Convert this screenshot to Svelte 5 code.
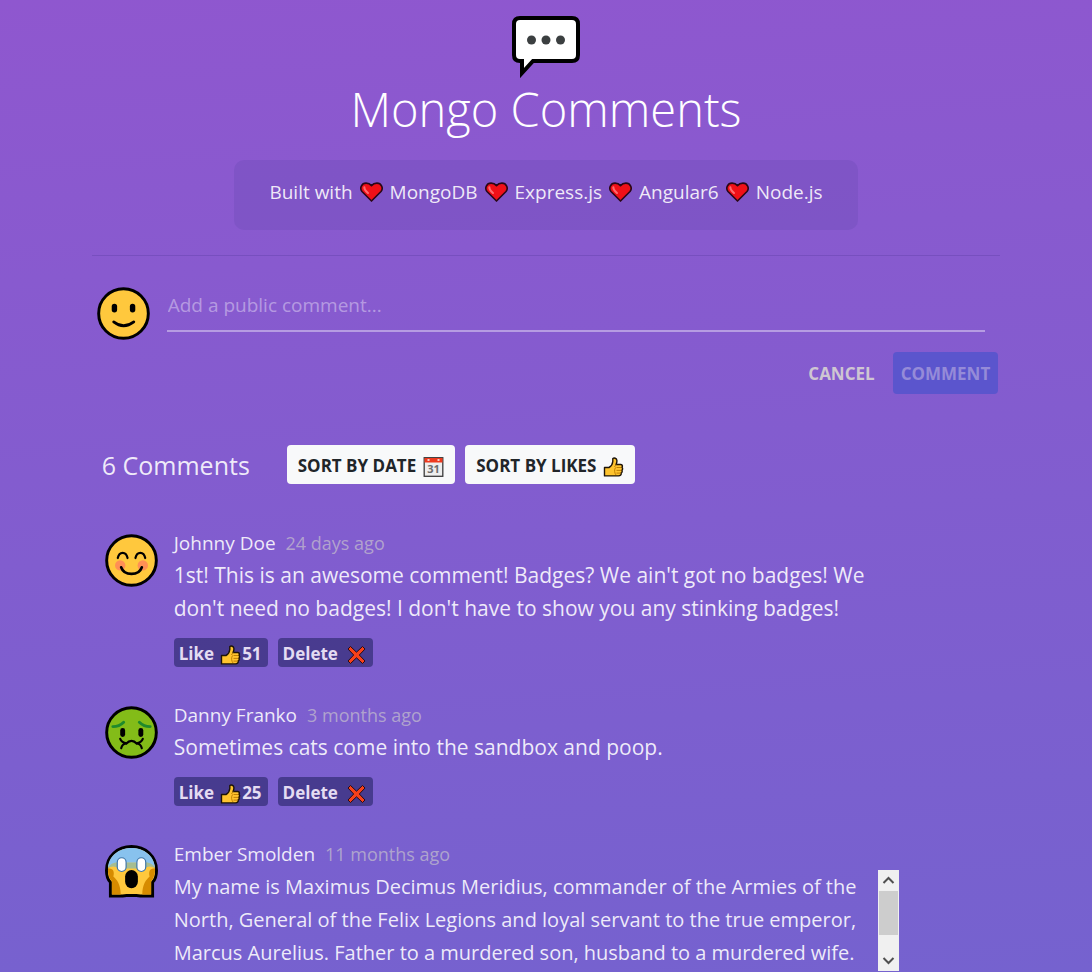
<script>
  let draft = $state('');

  const stack = ['MongoDB', 'Express.js', 'Angular6', 'Node.js'];

  const comments = [
    {
      face: 'blush',
      name: 'Johnny Doe',
      when: '24 days ago',
      likes: 51,
      text: "1st! This is an awesome comment! Badges? We ain't got no badges! We don't need no badges! I don't have to show you any stinking badges!"
    },
    {
      face: 'sick',
      name: 'Danny Franko',
      when: '3 months ago',
      likes: 25,
      text: 'Sometimes cats come into the sandbox and poop.'
    },
    {
      face: 'scream',
      name: 'Ember Smolden',
      when: '11 months ago',
      long: true,
      text: 'My name is Maximus Decimus Meridius, commander of the Armies of the North, General of the Felix Legions and loyal servant to the true emperor, Marcus Aurelius. Father to a murdered son, husband to a murdered wife.'
    }
  ];
</script>

{#snippet heart()}
  <svg class="heart" viewBox="0 0 24 21" aria-hidden="true">
    <path d="M12 20 2 10C-.8 6.5 1.6 1.2 6.300 1.200 9 1.200 11 2.600 12 3.800 13 2.600 15 1.200 17.700 1.200 22.400 1.200 24.800 6.500 22 10Z" fill="#f01018" stroke="#2a0717" stroke-width="1.700" stroke-linejoin="round" />
    <path d="M4.500 5.500C4.300 8 6 9.500 8.300 11.500" fill="none" stroke="#ff6a6e" stroke-width="2.200" stroke-linecap="round" />
  </svg>
{/snippet}

{#snippet thumb()}
  <svg class="glyph" viewBox="0 0 20 20" aria-hidden="true">
    <path d="M1 10.500H5.500C7.500 9.500 9 7 9.300 4.500V1.500C10.500.6 13.200 1 13.400 3.500 13.500 5.200 13 6.500 12.500 7.500H17.300C19.200 7.700 19.200 9.700 18.300 10.300 19.500 11 19.300 12.800 18.200 13.300 19 14.200 18.700 15.600 17.600 16 18 17.500 17 18.900 15 18.900H1Z" fill="#ffc42e" stroke="#1d1408" stroke-width="1.400" stroke-linejoin="round" />
    <path d="M12.500 7.500 11 10M13 10.500H18M13 13.400H18M13 16.100H17.500M12 10.500C10.500 13 11 16 12.500 18" fill="none" stroke="#b87800" stroke-width=".9" />
  </svg>
{/snippet}

{#snippet face(kind)}
  <svg class="face" viewBox="0 0 54 54" aria-hidden="true">
    {#if kind === 'scream'}
      <path d="M5.500 52V38C2.500 35 1.500 31 1.500 26 1.500 11 13 1.500 27 1.500S52.500 11 52.500 26C52.500 31 51.500 35 48.500 38V52H36L32 51.500H22L18 52Z" fill="#ffc83d" stroke="#000" stroke-width="3" />
      <path d="M3 23C4 11 14 3 27 3S50 11 51 23Q47 18 41 18H13Q7 18 3 23Z" fill="#88c2ee" />
      <path d="M3 24C5 19 10 17.500 15 18H39C44 17.500 49 19 51 24Q46 20 40 24H14Q8 20 3 24Z" fill="#a6bd91" />
      <path d="M7 50.500V37C4 34 3 29 3 24 8 23 10 27 8.500 32 12 35 16 40 16 50.500Z" fill="#d68b00" />
      <path d="M47 50.500V37C50 34 51 29 51 24 46 23 44 27 45.500 32 42 35 38 40 38 50.500Z" fill="#d68b00" />
      <rect x="12.500" y="13" width="9" height="14" rx="4.500" fill="#fff" stroke="#3d75a8" stroke-width="1.200" />
      <rect x="32.500" y="13" width="9" height="14" rx="4.500" fill="#fff" stroke="#3d75a8" stroke-width="1.200" />
      <rect x="20.500" y="25.500" width="13" height="18.500" rx="6.500" fill="#000" />
    {:else}
      <circle cx="27" cy="27" r="25.300" fill={kind === 'sick' ? '#83bc18' : '#ffc83d'} stroke="#000" stroke-width="3" />
      {#if kind === 'smile'}
        <rect x="15" y="17" width="5.500" height="9" rx="2.750" />
        <rect x="33.500" y="17" width="5.500" height="9" rx="2.750" />
        <path d="M17 35.500Q27 43.500 37.500 35.500" fill="none" stroke="#000" stroke-width="2.800" stroke-linecap="round" />
      {:else if kind === 'blush'}
        <circle cx="15.500" cy="32" r="5.300" fill="#ff8f55" />
        <circle cx="38.500" cy="32" r="5.300" fill="#ff8f55" />
        <path d="M13 24.500C14.500 17.500 21.500 17.500 23 24.500M31 24.500C32.500 17.500 39.500 17.500 41 24.500" fill="none" stroke="#000" stroke-width="2.200" stroke-linecap="round" />
        <path d="M16.500 34C19.500 43 34.500 43 37.500 34" fill="none" stroke="#000" stroke-width="2.800" stroke-linecap="round" />
      {:else}
        <path d="M8 21C13 21 16 19.500 19 16.500M46 21C41 21 38 19.500 35 16.500" fill="none" stroke="#1f8a2c" stroke-width="3" stroke-linecap="round" />
        <rect x="15.500" y="22.500" width="5" height="9" rx="2.500" />
        <rect x="34" y="22.500" width="5" height="9" rx="2.500" />
        <path d="M15.500 33.500Q17 37.500 22 38 17.500 38.500 16.500 43M38.500 33.500Q37 37.500 32 38 36.500 38.500 37.500 43M21.500 38.500C25 34.500 29 34.500 32.500 38.500" fill="none" stroke="#000" stroke-width="2.200" stroke-linecap="round" stroke-linejoin="round" />
      {/if}
    {/if}
  </svg>
{/snippet}

<main>
  <header>
    <svg class="logo" viewBox="0 0 68 62" aria-hidden="true">
      <path d="M8 2H60Q66 2 66 8V39Q66 45 60 45H21L10 57V45H8Q2 45 2 39V8Q2 2 8 2Z" fill="#fff" stroke="#000" stroke-width="4" />
      <g fill="#3b3f40"><circle cx="19.500" cy="24" r="4.500" /><circle cx="34" cy="24" r="4.500" /><circle cx="48.500" cy="24" r="4.500" /></g>
    </svg>
    <h1>Mongo Comments</h1>
    <p class="built">
      <span>Built with</span>
      {#each stack as tool}
        {@render heart()}
        <span>{tool}</span>
      {/each}
    </p>
  </header>

  <form onsubmit={(e) => e.preventDefault()}>
    <div class="entry">
      {@render face('smile')}
      <input type="text" aria-label="Add a public comment" placeholder="Add a public comment..." bind:value={draft} />
    </div>
    <div class="actions">
      <button type="button" class="cancel" onclick={() => (draft = '')}>CANCEL</button>
      <button type="submit" class="submit" disabled={!draft}>COMMENT</button>
    </div>
  </form>

  <section>
    <div class="toolbar">
      <h2>6 Comments</h2>
      <button type="button" class="sort">
        SORT BY DATE
        <svg class="glyph" viewBox="0 0 20 20" aria-hidden="true">
          <rect x=".7" y=".7" width="18.600" height="18.600" fill="#eee" stroke="#3b3b3b" stroke-width="1.300" />
          <path d="M1 1H19V5.500H1Z" fill="#ee3a1f" />
          <path d="M4 3H6M14 3H16" stroke="#fff" stroke-width="1.500" />
          <text x="10" y="16" text-anchor="middle" class="day">31</text>
        </svg>
      </button>
      <button type="button" class="sort">SORT BY LIKES {@render thumb()}</button>
    </div>

    <ul>
      {#each comments as c}
        <li>
          {@render face(c.face)}
          <article>
            <div class="meta"><span>{c.name}</span><time>{c.when}</time></div>
            {#if c.long}
              <div class="scroller">
                <p>{c.text}</p>
                <div class="bar" aria-hidden="true">
                  <svg viewBox="0 0 21 21"><path d="M5.500 13 10.500 8 15.500 13" /></svg>
                  <div class="grip"></div>
                  <svg viewBox="0 0 21 21"><path d="M5.500 8 10.500 13 15.500 8" /></svg>
                </div>
              </div>
            {:else}
              <p>{c.text}</p>
              <div class="tools">
                <button type="button" class="like">Like {@render thumb()}{c.likes}</button>
                <button type="button" class="delete">
                  Delete
                  <svg class="glyph" viewBox="0 0 20 20" aria-hidden="true">
                    <path d="M4 1.500 10 7.200 16 1.500 18.500 4 12.800 10 18.500 16 16 18.500 10 12.800 4 18.500 1.500 16 7.200 10 1.500 4Z" fill="#f8401a" stroke="#2b0c12" stroke-width="1" />
                  </svg>
                </button>
              </div>
            {/if}
          </article>
        </li>
      {/each}
    </ul>
  </section>
</main>

<style>
  :global(body) {
    margin: 0;
    min-height: 100vh;
    background: linear-gradient(176deg, #8f57cf, #7562cf);
  }
  main {
    width: 83.2%;
    margin: 0 auto;
    font-family: 'Open Sans', 'Noto Sans', sans-serif;
    color: rgba(255, 255, 255, 0.88);
  }
  h1, h2, p, ul {
    margin: 0;
    padding: 0;
    font-weight: 400;
  }
  svg {
    display: block;
    flex: none;
  }
  button {
    font: 700 17px/24px 'Open Sans', 'Noto Sans', sans-serif;
    border: 0;
    border-radius: 4px;
    display: flex;
    align-items: center;
    white-space: nowrap;
  }
  header {
    display: flex;
    flex-direction: column;
    align-items: center;
    padding: 16px 0 25px;
    border-bottom: 1px solid rgba(90, 60, 160, 0.35);
  }
  .logo {
    width: 68px;
    height: 62px;
  }
  h1 {
    font-size: 47px;
    line-height: 62px;
    font-weight: 300;
    color: #fff;
  }
  .built {
    display: flex;
    gap: 7px;
    box-sizing: border-box;
    height: 70px;
    margin-top: 20px;
    padding: 18px 35px;
    border-radius: 10px;
    background: rgba(90, 70, 170, 0.22);
    font-size: 19px;
    line-height: 28px;
  }
  .heart {
    width: 23px;
    height: 20px;
    margin-top: 4px;
  }
  form {
    padding: 31px 2px 0 5px;
  }
  .entry {
    display: flex;
    gap: 17px;
    padding-right: 13px;
  }
  .face {
    width: 53px;
    height: 53px;
  }
  input {
    flex: 1;
    min-width: 0;
    box-sizing: border-box;
    height: 45px;
    padding: 0 0 8px 1px;
    border: 0;
    border-bottom: 2px solid rgba(255, 255, 255, 0.4);
    background: none;
    color: #fff;
    font: 400 19px/28px 'Open Sans', 'Noto Sans', sans-serif;
    outline: none;
  }
  input::placeholder {
    color: rgba(255, 255, 255, 0.4);
    opacity: 1;
  }
  .actions {
    display: flex;
    justify-content: flex-end;
    gap: 10px;
    margin-top: 12px;
  }
  .actions button {
    height: 42px;
    padding: 2px 8px 0;
  }
  .cancel {
    background: none;
    color: #cfc6d2;
  }
  .submit {
    background: #5b55cd;
    color: #958bd8;
  }
  .toolbar {
    display: flex;
    align-items: center;
    gap: 10px;
    margin: 51px 0 0 10px;
  }
  h2 {
    width: 175px;
    font-size: 25px;
    line-height: 36px;
  }
  .sort {
    height: 39px;
    padding: 2px 11px 0;
    gap: 7px;
    background: #f8f9fa;
    color: #212529;
  }
  .glyph {
    width: 21px;
    height: 20px;
    margin-top: 2px;
  }
  .day {
    font: 700 11px 'Open Sans', sans-serif;
    fill: #6c6c6c;
  }
  ul {
    list-style: none;
    display: flex;
    flex-direction: column;
    gap: 34px;
    margin: 46px 0 0 13px;
  }
  li {
    display: flex;
    gap: 16px;
  }
  li > .face {
    margin-top: 4px;
  }
  article {
    flex: 0 1 725px;
    min-width: 0;
  }
  .meta {
    display: flex;
    align-items: baseline;
    gap: 10px;
    height: 29px;
    font-size: 19px;
    line-height: 26px;
  }
  time {
    font-size: 18px;
    color: rgba(215, 215, 205, 0.58);
  }
  article p {
    font-size: 21px;
    line-height: 33px;
  }
  .tools {
    display: flex;
    gap: 10px;
    margin-top: 13px;
    padding-bottom: 1px;
  }
  .tools button {
    height: 29px;
    padding: 2px 6px 0 5px;
    gap: 8px;
    background: rgba(50, 44, 115, 0.7);
    color: #e4dcf2;
  }
  .tools .like {
    gap: 1px;
  }
  .like .glyph {
    margin-left: 5px;
  }
  .scroller {
    display: flex;
    height: 101px;
  }
  .scroller p {
    flex: 1;
    font-size: 20px;
  }
  .bar {
    display: flex;
    flex-direction: column;
    justify-content: space-between;
    width: 21px;
    background: #f0f0f0;
  }
  .bar svg {
    width: 21px;
    height: 21px;
    fill: none;
    stroke: #505050;
    stroke-width: 2;
  }
  .grip {
    height: 45px;
    margin: 0 1px 15px;
    background: #cdcdcd;
  }
</style>
